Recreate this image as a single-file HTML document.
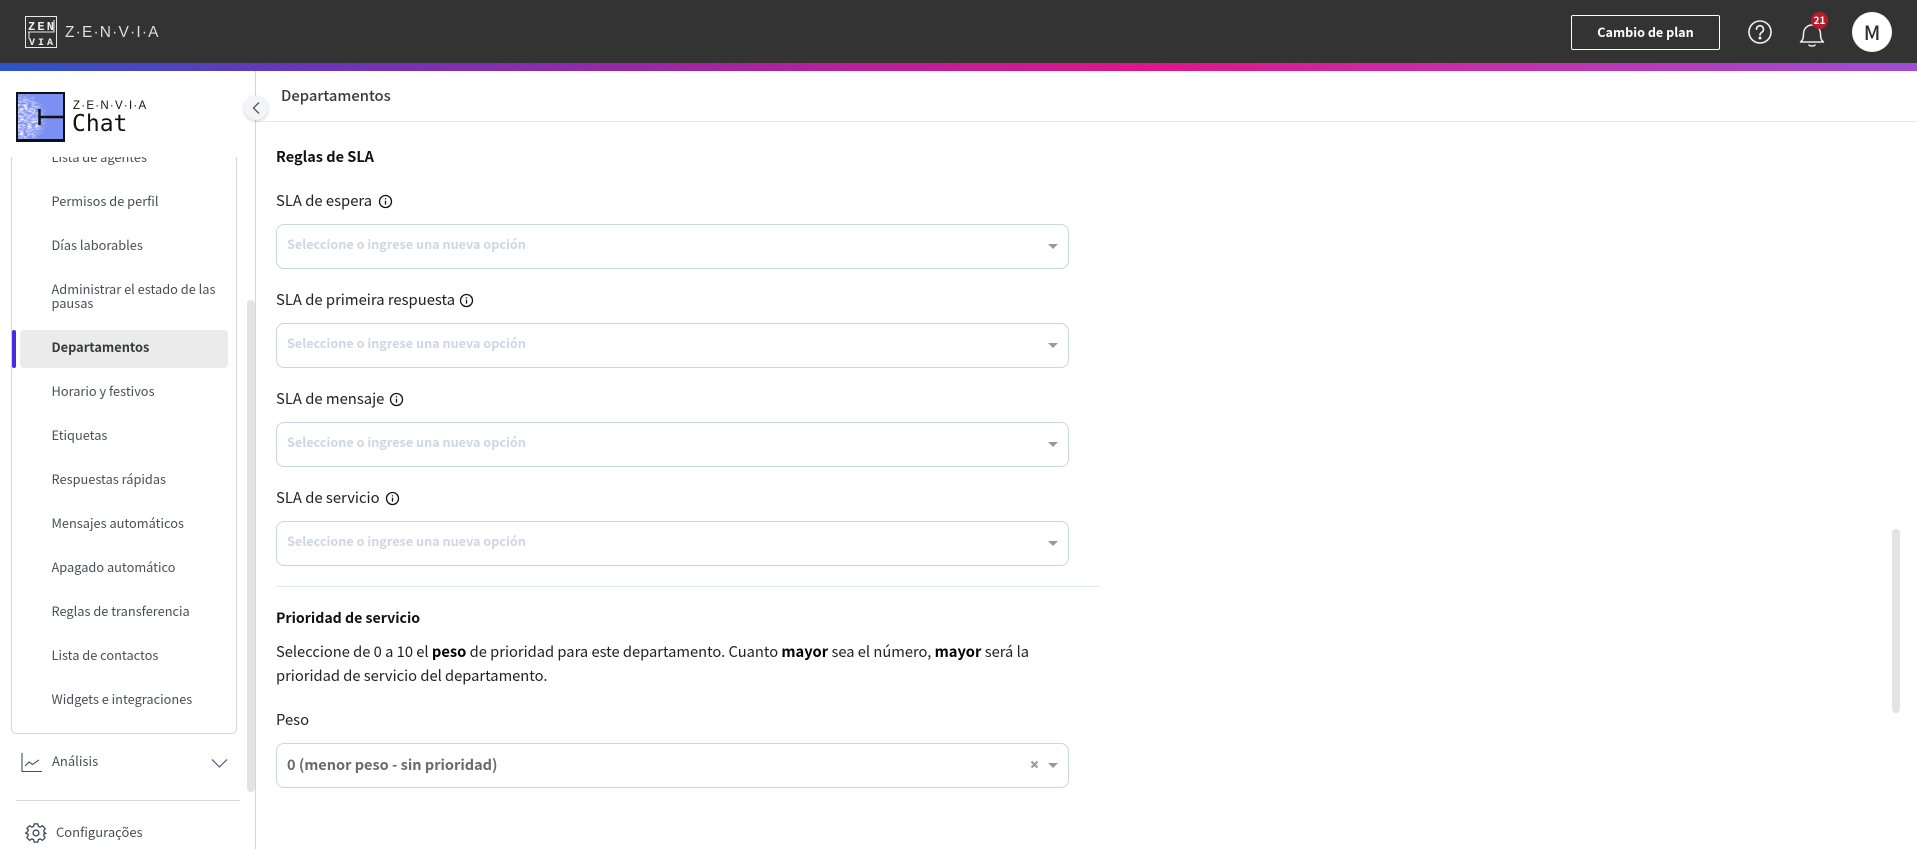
<!DOCTYPE html>
<html lang="es"><head><meta charset="utf-8"><title>Departamentos</title>
<style>
html,body{margin:0;padding:0;width:1917px;height:849px;overflow:hidden;background:#fff}
body{position:relative;font-family:"Noto Sans CJK JP","Liberation Sans",sans-serif;color:#111;-webkit-font-smoothing:auto}
.a{position:absolute;white-space:nowrap}
.top{left:0;top:0;width:1917px;height:63px;background:#333}
.grad{left:0;top:63px;width:1917px;height:8px;background:linear-gradient(90deg,#2d55c9 0%,#6a35b8 16%,#e0158a 60%,#c033b0 80%,#a04dd4 100%)}
.zen{left:65px;top:23px;font:15.5px/20px "Liberation Sans",sans-serif;color:#ddd;letter-spacing:1.17px}
.btn{left:1571px;top:15px;width:147px;height:33px;border:1px solid #fff;border-radius:2px;color:#fff;font-size:12.6px;font-weight:700;text-align:center;line-height:31px}
.av{left:1852px;top:12px;width:40px;height:40px;border-radius:50%;background:#fff;color:#263238;text-align:center;font-size:20px;line-height:39px;font-weight:500}
.badge{left:1811px;top:12px;width:17px;height:17px;border-radius:50%;background:#b71c2c;color:#fff;font-size:10px;font-weight:700;text-align:center;line-height:16px}
.vline{left:255px;top:71px;width:1px;height:778px;background:#d5d5d5}
.hline{left:256px;top:121px;width:1661px;height:1px;background:#e8eaee}
.ptitle{left:281px;top:85px;font-size:14.8px;line-height:22px;font-weight:500;color:#37393d}
.coll{left:244px;top:96px;width:24px;height:24px;border-radius:50%;background:#f3f4f6;box-shadow:0 1px 3px rgba(0,0,0,.2)}
.panel{left:11px;top:157px;width:224px;height:576px;border:1px solid #d5d5d5;border-top:0;border-radius:0 0 5px 5px;overflow:hidden}
.it{position:absolute;left:39.5px;font-size:12.8px;line-height:14px;color:#4a4f57;transform:translateY(-50%)}
.act{left:8px;top:173px;width:208px;height:38px;background:#ebebeb;border-radius:4px;position:absolute}
.bar{left:0;top:173px;width:4px;height:38px;background:#4b2be0;border-radius:2px;position:absolute}
.sb{background:#e3e3e3;border-radius:4px;width:8px}
.side{font-size:13px;line-height:18px;color:#4a4f57}
.h{left:276px;font-size:14.5px;font-weight:700;line-height:20px;color:#111}
.lb{left:276px;font-size:14.8px;line-height:20px;color:#222}
.sel{left:276px;width:791px;height:43px;border:1px solid #c8d5e6;border-radius:8px;background:#fff}
.ph{position:absolute;left:10px;top:9px;font-size:12.65px;font-weight:700;line-height:20px;color:#ced6e4}
.car{position:absolute;right:10px;top:19px;width:0;height:0;border-left:5px solid transparent;border-right:5px solid transparent;border-top:5px solid #999}
.p{left:276px;font-size:14.7px;line-height:20px;color:#222}
.p b{color:#000;font-weight:700}
</style></head><body>
<div class="a top"></div><div class="a grad"></div>
<svg class="a" style="left:25px;top:16px" width="32" height="32" viewBox="0 0 32 32" fill="none" stroke="#e8e8e8" stroke-width="1">
<rect x=".5" y=".5" width="31" height="31"/>
<text x="3" y="14" font-family="Liberation Mono,monospace" font-size="12" font-weight="700" stroke="none" fill="#eee" textLength="26">ZEN</text>
<path d="M3 16h1v7M29 4v12h-26"/>
<text x="4" y="29" font-family="Liberation Mono,monospace" font-size="10" font-weight="700" stroke="none" fill="#eee" textLength="24">VIA</text></svg>
<div class="a zen">Z·E·N·V·I·A</div>
<div class="a btn">Cambio de plan</div>
<svg class="a" style="left:1747px;top:19px" width="26" height="26" viewBox="0 0 26 26" fill="none" stroke="#f2f2f2" stroke-width="1.6"><circle cx="13" cy="13" r="11"/><path d="M9.500 10.200a3.500 3.500 0 1 1 5.400 3c-1.300.8-1.900 1.400-1.900 2.800" stroke-linecap="round"/><circle cx="13" cy="19" r=".7" fill="#f2f2f2"/></svg>
<svg class="a" style="left:1798px;top:20px" width="28" height="28" viewBox="0 0 28 28" fill="none" stroke="#eee" stroke-width="1.500"><path d="M2.500 22c2.500-2 3-4 3-8 0-5 3.500-9 8.500-9s8.500 4 8.500 9c0 4 .5 6 3 8z" stroke-linejoin="round"/><path d="M11 25c.8 1.300 5.200 1.300 6 0" stroke-linecap="round"/></svg>
<div class="a badge">21</div>
<div class="a av">M</div>

<svg class="a" style="left:16px;top:92px" width="49" height="50" viewBox="0 0 49 50">
<defs><filter id="n" x="0" y="0" width="100%" height="100%"><feTurbulence type="fractalNoise" baseFrequency=".25 .55" numOctaves="2" seed="4"/><feColorMatrix values="0 0 0 0 1 0 0 0 0 1 0 0 0 0 1 2.200 0 0 0 -.75"/></filter>
<radialGradient id="f" cx=".1" cy=".55" r=".55"><stop offset="0" stop-color="#fff"/><stop offset=".6" stop-color="#fff"/><stop offset="1" stop-color="#000"/></radialGradient><mask id="m"><rect width="49" height="50" fill="url(#f)"/></mask></defs>
<rect width="49" height="50" fill="#111"/><rect x="2" y="2" width="45" height="45" fill="#7c8ff2"/>
<rect x="2" y="2" width="45" height="45" filter="url(#n)" mask="url(#m)"/>
<path d="M23.500 17v16M23 25h24" stroke="#111" stroke-width="2.500"/></svg>
<div class="a" style="left:73px;top:99px;font:11.5px/14px 'Liberation Sans',sans-serif;color:#111;letter-spacing:1.25px">Z·E·N·V·I·A</div>
<div class="a" style="left:72px;top:110px;font:23px/28px 'DejaVu Sans Mono',monospace;color:#111">Chat</div>

<div class="a vline"></div><div class="a hline"></div>
<div class="a ptitle">Departamentos</div>
<div class="a coll"></div>
<svg class="a" style="left:250px;top:101px" width="12" height="14" viewBox="0 0 12 14" fill="none" stroke="#3d4f66" stroke-width="1.300"><path d="M9 1.500L3.500 7 9 12.500"/></svg>

<div class="a panel">
<div class="act"></div><div class="bar"></div>
<div class="it" style="top:0">Lista de agentes</div>
<div class="it" style="top:44px">Permisos de perfil</div>
<div class="it" style="top:88px">Días laborables</div>
<div class="it" style="top:139px;white-space:normal;width:170px">Administrar el estado de las pausas</div>
<div class="it" style="top:190px;font-weight:700;color:#37393d">Departamentos</div>
<div class="it" style="top:234px">Horario y festivos</div>
<div class="it" style="top:278px">Etiquetas</div>
<div class="it" style="top:322px">Respuestas rápidas</div>
<div class="it" style="top:366px">Mensajes automáticos</div>
<div class="it" style="top:410px">Apagado automático</div>
<div class="it" style="top:454px">Reglas de transferencia</div>
<div class="it" style="top:498px">Lista de contactos</div>
<div class="it" style="top:542px">Widgets e integraciones</div>
</div>
<div class="a sb" style="left:247px;top:300px;height:492px"></div>
<svg class="a" style="left:20px;top:752px" width="24" height="21" viewBox="0 0 24 21" fill="none" stroke="#3d5068" stroke-width="1.100"><path d="M2 1v18.500h20"/><path d="M5 14l4-4 3.500 2.500L19 8"/></svg>
<div class="a side" style="left:52px;top:752px">Análisis</div>
<svg class="a" style="left:211px;top:758px" width="17" height="11" viewBox="0 0 17 11" fill="none" stroke="#5a6b80" stroke-width="1.300"><path d="M1 1.500l7.500 7.500L16 1.500"/></svg>
<div class="a" style="left:16px;top:800px;width:224px;height:1px;background:#d8d8d8"></div>
<svg class="a" style="left:25px;top:822px" width="22" height="22" viewBox="0 0 24 24" fill="none" stroke="#3a4654" stroke-width="1.400" stroke-linejoin="round"><circle cx="12" cy="12" r="3.200"/><path d="M10 2h4l.6 2.800 1.900.8L19 4l3 3.300-1.600 2.400.6 1.900L23 12.500v0l-2 .3-.6 1.900L22 17l-3 3-2.500-1.600-1.900.8L14 22h-4l-.6-2.800-1.900-.8L5 20l-3-3 1.600-2.300-.6-1.900L1 12.500v-1l2-.9.6-1.900L2 7l3-3 2.500 1.600 1.900-.8z"/></svg>
<div class="a side" style="left:56px;top:823px">Configurações</div>

<div class="a h" style="top:147px">Reglas de SLA</div>

<div class="a lb" style="top:191px">SLA de espera</div>
<svg class="a" style="left:378px;top:194px" width="15" height="15" viewBox="0 0 15 15" fill="none" stroke="#111" stroke-width="1.300"><circle cx="7.500" cy="7.500" r="6"/><path d="M7.500 6.800v3.800M7.500 4.200v1.300"/></svg>
<div class="a sel" style="top:224px"><div class="ph">Seleccione o ingrese una nueva opción</div><div class="car"></div></div>

<div class="a lb" style="top:290px">SLA de primeira respuesta</div>
<svg class="a" style="left:459px;top:293px" width="15" height="15" viewBox="0 0 15 15" fill="none" stroke="#111" stroke-width="1.300"><circle cx="7.500" cy="7.500" r="6"/><path d="M7.500 6.800v3.800M7.500 4.200v1.300"/></svg>
<div class="a sel" style="top:323px"><div class="ph">Seleccione o ingrese una nueva opción</div><div class="car"></div></div>

<div class="a lb" style="top:389px">SLA de mensaje</div>
<svg class="a" style="left:389px;top:392px" width="15" height="15" viewBox="0 0 15 15" fill="none" stroke="#111" stroke-width="1.300"><circle cx="7.500" cy="7.500" r="6"/><path d="M7.500 6.800v3.800M7.500 4.200v1.300"/></svg>
<div class="a sel" style="top:422px"><div class="ph">Seleccione o ingrese una nueva opción</div><div class="car"></div></div>

<div class="a lb" style="top:488px">SLA de servicio</div>
<svg class="a" style="left:385px;top:491px" width="15" height="15" viewBox="0 0 15 15" fill="none" stroke="#111" stroke-width="1.300"><circle cx="7.500" cy="7.500" r="6"/><path d="M7.500 6.800v3.800M7.500 4.200v1.300"/></svg>
<div class="a sel" style="top:521px"><div class="ph">Seleccione o ingrese una nueva opción</div><div class="car"></div></div>

<div class="a" style="left:276px;top:586px;width:824px;height:1px;background:#e4e9ef"></div>
<div class="a h" style="top:608px;font-size:14.15px">Prioridad de servicio</div>
<div class="a p" style="top:642px">Seleccione de 0 a 10 el <b>peso</b> de prioridad para este departamento. Cuanto <b>mayor</b> sea el número, <b>mayor</b> será la</div>
<div class="a p" style="top:666px">prioridad de servicio del departamento.</div>
<div class="a lb" style="top:710px">Peso</div>
<div class="a sel" style="top:743px"><div class="ph" style="color:#6a6a6a;font-size:14.5px;top:11px">0 (menor peso - sin prioridad)</div><svg class="a" style="left:752.5px;top:16px" width="9" height="9" viewBox="0 0 9 9" fill="none" stroke="#999" stroke-width="2"><path d="M1.500 1.500l6 6M7.500 1.500l-6 6"/></svg><div class="car"></div></div>

<div class="a sb" style="left:1892px;top:529px;height:184px"></div>
</body></html>
